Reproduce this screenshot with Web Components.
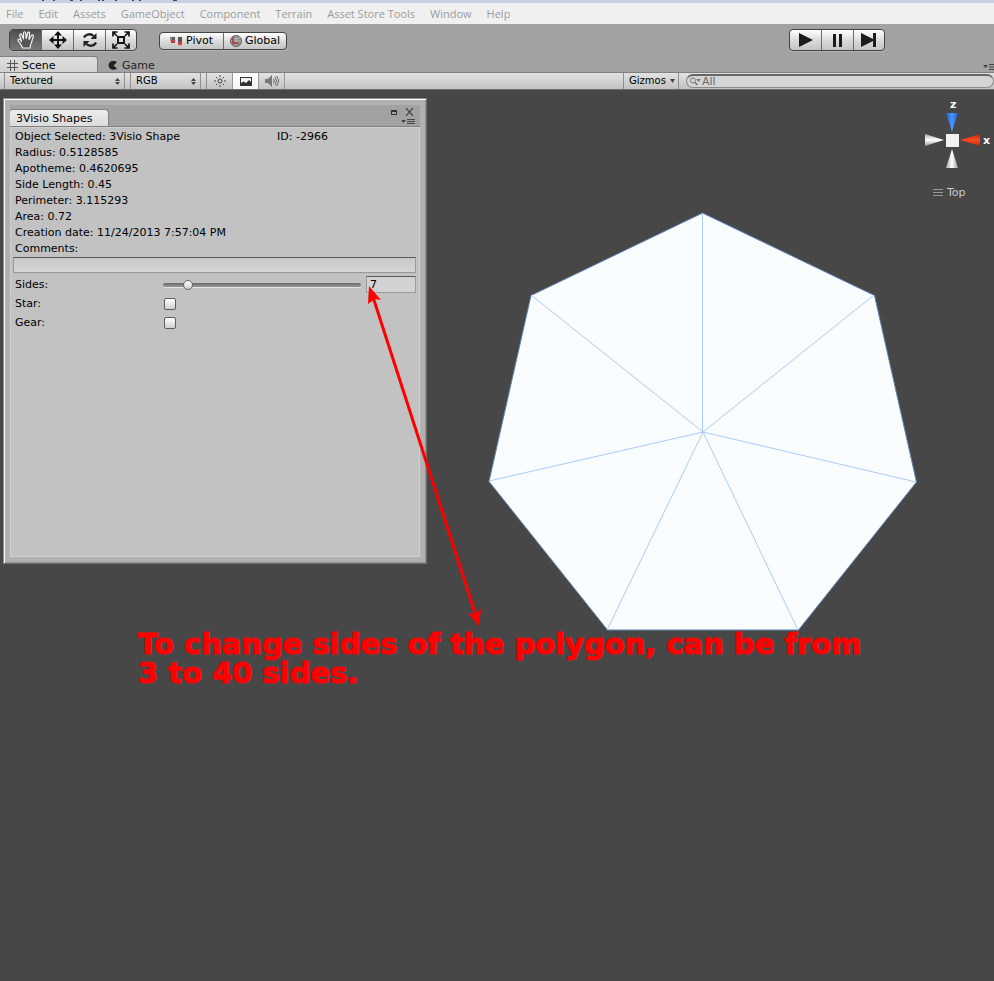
<!DOCTYPE html>
<html lang="en">
<head>
<meta charset="utf-8">
<title>Scene editor</title>
<style>
html,body{margin:0;height:100%}
body{font:11px/16px "DejaVu Sans",Verdana,sans-serif;color:#000;background:#474747}
</style>
</head>
<body>
<editor-app></editor-app>
<script>
const define = (name, html, setup) => customElements.define(name, class extends HTMLElement {
  constructor() {
    super();
    const t = document.createElement('template');
    t.innerHTML = '<style>*{box-sizing:border-box}button,input,select{font:inherit;color:inherit;margin:0;border:0;padding:0;background:none;border-radius:0}svg{display:block;flex:none}</style>' + html;
    this.attachShadow({mode: 'open'}).append(t.content.cloneNode(true));
    if (setup) setup(this, this.shadowRoot);
  }
});

define('menu-bar', `
<style>
:host{display:block;background:#f0f0f0;color:#9b9b9b;font:11px/20px "Open Sans","Noto Sans",sans-serif}
.title{height:3px;background:#c5d3e1}
.title svg{height:2px;width:200px}
nav{display:flex;gap:15px;padding-left:6px}
button{white-space:nowrap;height:21px}
</style>
<div class="title"><svg viewBox="0 0 200 2" fill="#445"><path d="M42 0h2v1h-2zM53 0h2v1h-2zM70 0h3v1h-3zM80 0h2v1h-2zM98 0h2v1h-2zM102 0h2v1h-2zM115 0h2v1h-2zM132 0h2v1h-2zM139 0h2v1h-2zM173 0h4v1h-4z"/></svg></div>
<nav><button>File</button><button>Edit</button><button>Assets</button><button>GameObject</button><button>Component</button><button>Terrain</button><button>Asset Store Tools</button><button>Window</button><button>Help</button></nav>`);

define('button-strip', `
<style>
:host{display:flex;border:1px solid #444;border-radius:4px;overflow:hidden;background:linear-gradient(#fff,#d9d9d9 55%,#c4c4c4);box-shadow:0 1px #b4b4b4}
::slotted(tool-button:not(:first-child)){border-left:1px solid #6b6b6b}
</style><slot></slot>`);

define('tool-button', `
<style>
:host{display:flex;width:32px;height:20px}
:host([wide]){width:64px;height:16px}
:host(:first-child),:host(:last-child){width:31px}
:host([wide]:first-child),:host([wide]:last-child){width:63px}
:host([active]){background:linear-gradient(#4f4f4f,#777)}
button{flex:1;display:flex;align-items:center;justify-content:center;gap:3px;white-space:nowrap}
</style><button><slot></slot></button>`, (el, root) => {
  if (el.getAttribute('label')) root.querySelector('button').setAttribute('aria-label', el.getAttribute('label'));
});

define('main-toolbar', `
<style>
:host{display:flex;align-items:center;height:32px;padding:0 109px 0 9px;background:#a2a2a2}
.play{margin-left:auto}.pivot{margin:2px 0 0 22px}
</style>
<button-strip>
<tool-button active label="Hand"><svg width="20" height="20" viewBox="0 0 20 20" fill="#555" stroke="#f1f1f1" stroke-width="1.2" stroke-linejoin="round"><path d="M6.500 18.000C5 14 3.500 13 2 10.500C1.500 9 3.500 8.800 4.500 10.200L5.500 11.500L3.700 5.500C3.500 3.700 5.300 3.400 5.800 5L7.500 9L7.500 3C7.700 1.300 9.500 1.300 9.700 3L10.300 8.500L11.600 3C12.200 1.500 13.800 2 13.600 3.500L13 9.300L15.500 5.500C16.500 4.300 18 5.200 17.300 6.700C16 9.500 16 12 14.500 15L14 18z"/></svg></tool-button>
<tool-button label="Move"><svg width="18" height="18" viewBox="0 0 18 18" fill="#111"><path d="M9 0l4 4.500h-3v3.500h3.500v-3l4.500 4-4.500 4v-3H10v3.500h3L9 18l-4-4.500h3V10H4.500v3L0 9l4.500-4v3H8V4.500H5z"/></svg></tool-button>
<tool-button label="Rotate"><svg width="16" height="16" viewBox="0 0 16 16"><path d="M2 5.500C4 1.500 9 1.500 11.500 4M14 10.500C12 14.500 7 14.500 4.500 12" fill="none" stroke="#222" stroke-width="2.300"/><path d="M14.500 1v6H8.500zM1.500 15V9h6z" fill="#222"/></svg></tool-button>
<tool-button label="Scale"><svg width="18" height="18" viewBox="0 0 18 18"><path d="M6 6h6v6H6z" fill="#ddd" stroke="#111" stroke-width="2"/><path d="M1 5.500V1h4.500M12.500 1H17v4.500M17 12.500V17h-4.500M5.500 17H1v-4.500M1 1l4 4M17 1l-4 4M17 17l-4-4M1 17l4-4" fill="none" stroke="#111" stroke-width="1.700"/></svg></tool-button>
</button-strip>
<button-strip class="pivot">
<tool-button wide><svg width="13" height="10" viewBox="0 0 13 10"><path d="M1 1h4v6H1zM8 1h4v7H8z" fill="#555"/><path d="M0 1h2v4H0z" fill="#888"/><circle cx="3.500" cy="5" r="1.800" fill="#d33b45"/><circle cx="10" cy="7.500" r="2" fill="#d33b45"/></svg>Pivot</tool-button>
<tool-button wide><svg width="12" height="12" viewBox="0 0 12 12"><circle cx="6" cy="6" r="5.500" fill="#8b8b8b" stroke="#666"/><path d="M6 1v10M1 6h10M2 3q4 2 8 0" fill="none" stroke="#bbb"/><path d="M3 2v6h5" fill="none" stroke="#c92b35" stroke-width="1.500"/></svg>Global</tool-button>
</button-strip>
<button-strip class="play">
<tool-button label="Play"><svg width="16" height="14" viewBox="0 0 16 14"><path d="M1 0l14 7-14 7z" fill="#1b1b1b"/></svg></tool-button>
<tool-button label="Pause"><svg width="10" height="13" viewBox="0 0 10 13"><path d="M0 0h3v13H0zM6 0h3v13H6z" fill="#1b1b1b"/></svg></tool-button>
<tool-button label="Step"><svg width="16" height="14" viewBox="0 0 16 14"><path d="M0 0l12 6V0h3v14h-3V8L0 14z" fill="#1b1b1b"/></svg></tool-button>
</button-strip>`);

define('dock-tabs', `
<style>
:host{display:flex;align-items:flex-end;height:17px;background:#a2a2a2;border-bottom:1px solid #808080}
button{display:flex;align-items:center;gap:3px;height:16px;padding:2px 0 0 7px;margin-right:10px;white-space:nowrap;color:#222}
.on{width:98px;border-radius:0 4px 0 0;border:solid #808080;border-width:1px 1px 0 0;background:linear-gradient(#dedede,#d2d2d2);color:#000}
.off{padding:4px 0 0}
.menu{margin:0 0 0 auto;padding:6px 0 0}
</style>
<button class="on" role="tab"><svg width="12" height="11" viewBox="0 0 12 11"><path d="M3.500 0v11M7.500 0v11M0 3.500h11M0 7.500h11" stroke="#555" fill="none"/></svg>Scene</button>
<button class="off" role="tab"><svg width="11" height="11" viewBox="0 0 11 11"><path d="M9 1A5 4.500 0 1 0 9 7.500L5.500 4.500z" fill="#222"/></svg>Game</button>
<button class="menu" aria-label="Tab options"><svg width="11" height="7" viewBox="0 0 11 7"><path d="M0 1h5L2.500 4zM6 0h6v1H6zM6 2.500h6v1H6zM6 5h6v1H6z" fill="#444"/></svg></button>`);

define('scene-toolbar', `
<style>
:host{display:flex;height:17px;font-size:10px;line-height:16px;background:linear-gradient(#e2e2e2,#c2c2c2);border-bottom:1px solid #6e6e6e;padding-left:4px}
.drop{display:grid;align-items:center;border:solid #8f8f8f;border-width:0 1px;height:16px;margin-right:5px}
.drop>*{grid-area:1/1}
.drop svg{justify-self:end;margin-right:4px;pointer-events:none}
select{appearance:none;width:100%;height:16px;padding-left:5px}
.mode{width:121px}.rgb{width:71px}
.icons{display:flex;border-left:1px solid #8f8f8f}
.icons button{width:26px;height:16px;display:flex;align-items:center;justify-content:center;border-right:1px solid #999}
.icons .on{background:linear-gradient(#fff,#f4f4f4)}
.giz{margin-left:auto;width:56px;border:solid #8f8f8f;border-width:0 1px;display:flex;align-items:center;justify-content:space-between;padding:0 3px 0 5px;height:16px}
.search{display:flex;align-items:center;width:308px;height:14px;margin:1px 0 0 7px;border:1px solid #8a8a8a;border-top:2px solid #666;border-radius:8px;background:#d5d5d5;color:#6a6a6a;padding-left:3px;font-size:11px}
input{flex:1;min-width:0;height:12px;outline:0;padding-left:1px}
</style>
<label class="drop mode"><select aria-label="Draw mode"><option>Textured</option></select><svg width="5" height="7" viewBox="0 0 5 7"><path d="M0 3l2.500-3L5 3zM0 4h5L2.500 7z" fill="#444"/></svg></label>
<label class="drop rgb"><select aria-label="Channels"><option>RGB</option></select><svg width="5" height="7" viewBox="0 0 5 7"><path d="M0 3l2.500-3L5 3zM0 4h5L2.500 7z" fill="#444"/></svg></label>
<div class="icons">
<button aria-label="Lighting"><svg width="12" height="12" viewBox="0 0 12 12"><circle cx="6" cy="6" r="2" fill="none" stroke="#444"/><path d="M6 0v2M6 10v2M0 6h2M10 6h2M2 2l1.300 1.300M10 2L8.700 3.300M2 10l1.300-1.300M10 10L8.700 8.700" stroke="#444"/></svg></button>
<button class="on" aria-label="Skybox"><svg width="12" height="9" viewBox="0 0 12 9"><path d="M0 0h12v9H0z" fill="#333"/><path d="M1 1h10v4L9 3 6 6 3.500 4.500 1 6z" fill="#f4f4f4"/></svg></button>
<button aria-label="Audio"><svg width="14" height="12" viewBox="0 0 14 12"><path d="M0 4h3l4-4v12L3 8H0z" fill="#777"/><path d="M8.500 4q1.500 2 0 4M10 2q3 4 0 8M11.500 1q4 5 0 10" fill="none" stroke="#666"/></svg></button>
</div>
<button class="giz">Gizmos<svg width="5" height="9" viewBox="0 0 5 9"><path d="M0 2h5L2.500 6z" fill="#444"/></svg></button>
<label class="search"><svg width="11" height="9" viewBox="0 0 11 9"><circle cx="3" cy="3.500" r="2.500" fill="none" stroke="#777"/><path d="M5 5.500L7.500 8" stroke="#777" stroke-width="1.500"/><path d="M6 2h5L8.500 5z" fill="#777"/></svg><input aria-label="Search" value="All"></label>`);

define('property-row', `
<style>:host{display:flex;height:16px;white-space:nowrap}
span{flex:0 0 262px}</style>
<span><slot></slot></span><slot name="end"></slot>`);

define('shape-window', `
<style>
:host{display:flex;flex-direction:column;background:#b1b1b1;border:1px solid;border-color:#8c8c8c #707070 #707070 #8c8c8c;box-shadow:inset 1px 1px #fff,inset -1px -1px #8f8f8f;padding:6px}
header{display:flex;align-items:flex-end;height:22px;background:#a2a2a2;border-bottom:1px solid #808080}
.tab{width:99px;height:17px;padding:1px 0 0 6px;text-align:left;white-space:nowrap;background:linear-gradient(#ececec,#dcdcdc);border:solid #808080;border-width:1px 1px 0 0;border-radius:3px 4px 0 0}
.ctl{margin-left:auto;display:grid;grid-template-columns:auto auto;gap:3px 8px;padding:0 5px 1px 0;align-items:center;justify-items:end}
.ctl .x{padding-right:1px}
.ctl .m{grid-column:1/3}
.body{flex:1;background:#c2c2c2;border:1px solid #cfcfcf;padding:1px 3px 0 2px}
property-row,label.t{padding-left:2px}
label.t{display:block}
.comments{display:block;width:100%;height:16px;margin-bottom:2px;background:linear-gradient(#c9c9c9,#d6d6d6)}
.box{border:1px solid #999;border-top-color:#5c5c5c;padding-left:3px;outline:0}
.row{display:flex;align-items:center;height:19px;padding-left:2px}
.row label{flex:0 0 148px}
.num{width:50px;height:17px;background:#d2d2d2;margin-left:5px}
input[type=range]{appearance:none;flex:1;min-width:0;height:12px}
input[type=range]::-webkit-slider-runnable-track{height:4px;border-radius:2px;background:linear-gradient(#696969,#9a9a9a);box-shadow:0 1px #e0e0e0}
input[type=range]::-webkit-slider-thumb{appearance:none;width:10px;height:10px;margin-top:-3px;border-radius:50%;border:1px solid #666;background:linear-gradient(#fff,#ccc)}
input[type=checkbox]{appearance:none;width:12px;height:12px;margin-left:1px;border:1px solid #5d5d5d;border-radius:2px;background:linear-gradient(#fff,#cfcfcf)}
</style>
<header><button class="tab" role="tab">3Visio Shapes</button>
<div class="ctl"><button aria-label="Maximize"><svg width="6" height="5" viewBox="0 0 6 5"><path d="M0 0h6v5H0zM1 2v2h4V2z" fill="#333" fill-rule="evenodd"/></svg></button><button class="x" aria-label="Close"><svg width="9" height="8" viewBox="0 0 9 8"><path d="M1 0l7 8M8 0L1 8" stroke="#444" stroke-width="1.200"/></svg></button><button class="m" aria-label="Options"><svg width="14" height="6" viewBox="0 0 14 6"><path d="M0 1h5L2.500 4zM6 0h8v1H6zM6 2h8v1H6zM6 4h8v1H6z" fill="#444"/></svg></button></div></header>
<div class="body">
<property-row>Object Selected: 3Visio Shape<span slot="end">ID: -2966</span></property-row>
<property-row>Radius: 0.5128585</property-row>
<property-row>Apotheme: 0.4620695</property-row>
<property-row>Side Length: 0.45</property-row>
<property-row>Perimeter: 3.115293</property-row>
<property-row>Area: 0.72</property-row>
<property-row>Creation date: 11/24/2013 7:57:04 PM</property-row>
<label class="t" for="c">Comments:</label>
<input id="c" class="comments box">
<div class="row"><label for="s">Sides:</label><input id="s" type="range" min="3" max="40" value="7"><input class="num box" aria-label="Sides value" value="7"></div>
<div class="row"><label for="st">Star:</label><input id="st" type="checkbox"></div>
<div class="row"><label for="g">Gear:</label><input id="g" type="checkbox"></div>
</div>`);

define('axis-gizmo', `
<style>:host{display:flex;flex-direction:column;gap:15px;color:#ccc}
div{display:flex;align-items:center;gap:3px;padding-left:9px}
text{font:bold 11px "DejaVu Sans",sans-serif;fill:#fff}</style>
<svg width="70" height="73" viewBox="0 0 70 73">
<defs><linearGradient id="v" x2="0" y2="1"><stop stop-color="#aaa"/><stop offset=".5" stop-color="#fff"/><stop offset="1" stop-color="#999"/></linearGradient><linearGradient id="h"><stop stop-color="#aaa"/><stop offset=".5" stop-color="#fff"/><stop offset="1" stop-color="#999"/></linearGradient><linearGradient id="b"><stop stop-color="#2560c8"/><stop offset=".5" stop-color="#4a96ff"/><stop offset="1" stop-color="#2560c8"/></linearGradient><linearGradient id="r" x2="0" y2="1"><stop stop-color="#b52a12"/><stop offset=".5" stop-color="#ff4a25"/><stop offset="1" stop-color="#c02508"/></linearGradient></defs>
<path d="M22 16h12l-6 19z" fill="url(#b)"/><path d="M1 37v12l19-6z" fill="url(#v)"/><path d="M56 37v12l-20-6z" fill="url(#r)"/><path d="M22 71h12l-6-19z" fill="url(#h)"/><path d="M22 37h13v13H22z" fill="#f1f1f1"/>
<text x="26" y="11">z</text><text x="59" y="47">x</text></svg>
<div><svg width="11" height="8" viewBox="0 0 11 8"><path d="M0 .5h10M0 3.500h10M0 6.500h10" stroke="#999"/></svg>Top</div>`);

define('scene-view', `
<style>
:host{display:block;position:relative;flex:1;background:#474747;overflow:hidden}
:host>*{position:absolute}
.poly{left:487px;top:120px}
shape-window{left:3px;top:8px;width:424px;height:466px}
axis-gizmo{right:0;top:7px}
.arrow{left:364px;top:194px}
p{margin:0;left:138px;top:540px;color:#f00;font:900 29px/29px "DejaVu Sans",Verdana,sans-serif;-webkit-text-stroke:1px #f00;white-space:nowrap}
</style>
<svg class="poly" width="432" height="424" viewBox="487 210 432 424"><path d="M702.500 213L874.500 295.500L916.500 482L798.500 630L607.500 630L489 481.500L531 295.500z" fill="#fafdff" stroke="#5b83b5"/><path d="M702.500 432V213M703 432L874 295M703 432L916 482M703 432L798 630M703 432L607 630M703 432L489 481M703 432L531 295" stroke="#a9cbf7" fill="none"/></svg>
<shape-window></shape-window>
<axis-gizmo></axis-gizmo>
<svg class="arrow" width="122" height="346" viewBox="364 284 122 346"><path d="M373 297L476 616" stroke="#f00" stroke-width="3"/><path d="M369 286l12 14-6-1-7 5zM479 626l-11-13 7 1 6-5z" fill="#f00"/></svg>
<p>To change sides of the polygon, can be from<br>3 to 40 sides.</p>`);

define('editor-app', `
<style>:host{display:flex;flex-direction:column;min-height:100vh}</style>
<menu-bar></menu-bar><main-toolbar></main-toolbar><dock-tabs></dock-tabs><scene-toolbar></scene-toolbar><scene-view></scene-view>`);
</script>
</body>
</html>
